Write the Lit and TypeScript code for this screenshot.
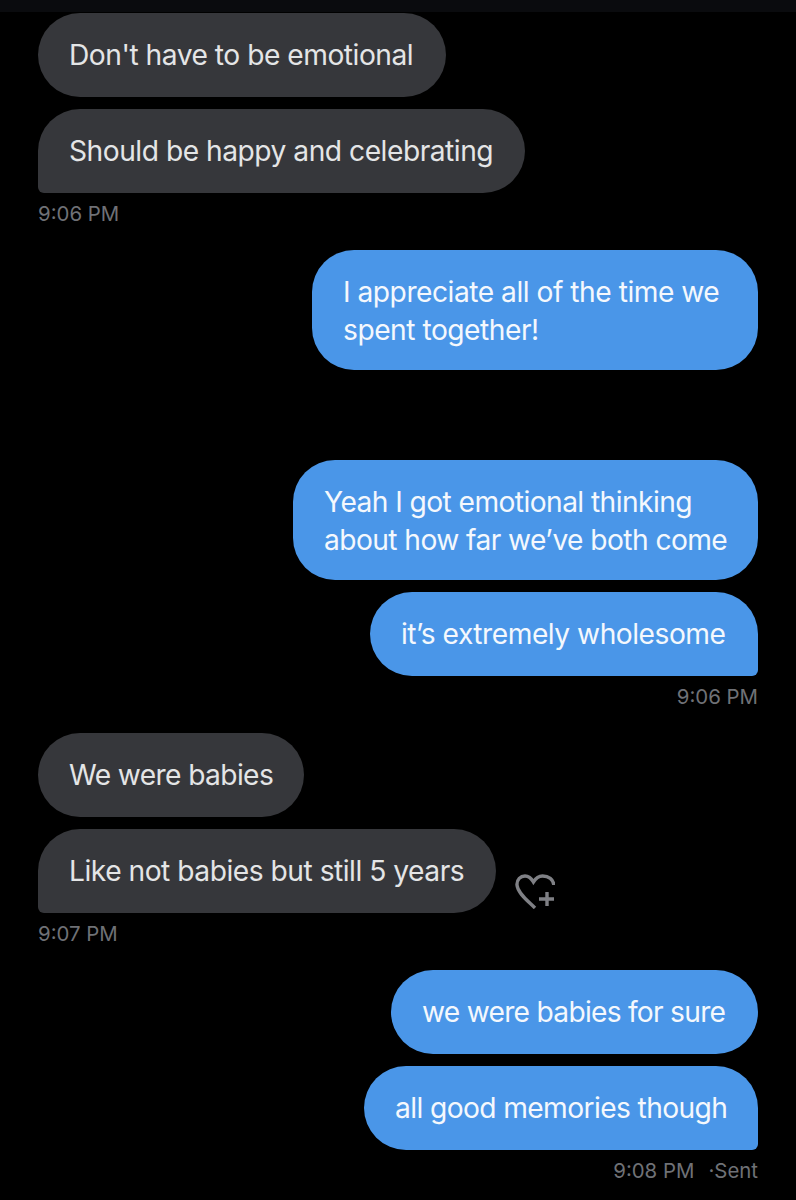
import { LitElement, html, css } from 'lit';
import { customElement } from 'lit/decorators.js';

type Bubble = {
    lines: string[];
    width: number;
    spacing?: number;
    react?: boolean;
};

type Group = {
    side: 'in' | 'out';
    bubbles: Bubble[];
    time?: string;
    sent?: boolean;
    after: number;
};

const groups: Group[] = [
    {
        side: 'in',
        bubbles: [
            { lines: ["Don't have to be emotional"], width: 408 },
            { lines: ['Should be happy and celebrating'], width: 487 },
        ],
        time: '9:06 PM',
        after: 17,
    },
    {
        side: 'out',
        bubbles: [{ lines: ['I appreciate all of the time we', 'spent together!'], width: 446 }],
        after: 90,
    },
    {
        side: 'out',
        bubbles: [
            { lines: ['Yeah I got emotional thinking', 'about how far we’ve both come'], width: 465, spacing: -0.09 },
            { lines: ['it’s extremely wholesome'], width: 388, spacing: 0 },
        ],
        time: '9:06 PM',
        after: 17,
    },
    {
        side: 'in',
        bubbles: [
            { lines: ['We were babies'], width: 266, spacing: -0.14 },
            { lines: ['Like not babies but still 5 years'], width: 458, react: true },
        ],
        time: '9:07 PM',
        after: 17,
    },
    {
        side: 'out',
        bubbles: [
            { lines: ['we were babies for sure'], width: 367, spacing: -0.25 },
            { lines: ['all good memories though'], width: 394, spacing: -0.12 },
        ],
        time: '9:08 PM',
        sent: true,
        after: 0,
    },
];

@customElement('app-root')
export class AppRoot extends LitElement {
    static styles = css`
    :host {
        display: block;
        width: 796px;
        height: 1200px;
        overflow: hidden;
        background: #000;
        font-family: Inter, "Liberation Sans", sans-serif;
    }
    .topbar {
        height: 12px;
        background: #0a0b0e;
    }
    .thread {
        display: flex;
        flex-direction: column;
        padding: 1px 38px 0;
    }
    .group {
        display: flex;
        flex-direction: column;
        gap: 12px;
    }
    .group.out {
        align-items: flex-end;
    }
    .group.in {
        align-items: flex-start;
    }
    .row {
        display: flex;
        align-items: flex-end;
    }
    .bubble {
        box-sizing: border-box;
        padding: 23px 31px;
        border-radius: 42px;
        font-size: 28.2px;
        line-height: 38px;
        white-space: nowrap;
    }
    .bubble.multi {
        padding-bottom: 21px;
    }
    .in .bubble {
        background: #36373b;
        color: #e4e5e6;
    }
    .out .bubble {
        background: #4a96e8;
        color: #f4f8fd;
    }
    .in .bubble.tail {
        border-bottom-left-radius: 6px;
    }
    .out .bubble.tail {
        border-bottom-right-radius: 6px;
    }
    .line {
        display: block;
    }
    .react {
        display: block;
        margin: 0 0 4px 19px;
        flex: none;
    }
    .time {
        margin-top: -11px;
        height: 39px;
        font-size: 20.4px;
        line-height: 40px;
        color: #6f7176;
        white-space: nowrap;
    }
    .status {
        margin-left: 14px;
    }
    `;

    renderBubble(b: Bubble, tail: boolean) {
        const classes = `bubble ${tail ? 'tail' : ''} ${b.lines.length > 1 ? 'multi' : ''}`;
        return html`
        <div class="row">
            <div class=${classes} style="width: ${b.width}px">
                ${b.lines.map((l) => html`<span class="line" style="letter-spacing: ${-0.49 + (b.spacing ?? 0)}px">${l}</span>`)}
            </div>
            ${b.react ? html`
            <svg class="react" width="40" height="35" viewBox="0 0 40 35" fill="none" stroke="#7f8085" stroke-width="3.4">
                <path d="M20 34 C13 27 2.5 19 2 11 C1.7 5.5 5.6 2 10 2 C14 2 16.4 4.4 18.4 8 C20.6 4.4 23.6 2 27.6 2 C33.6 2 38.4 5.4 38.8 11"/>
                <path d="M32 18 V32 M24 25 H39"/>
            </svg>` : ''}
        </div>
        `;
    }

    render() {
        return html`
        <div class="topbar"></div>
        <div class="thread">
            ${groups.map((g) => html`
            <div class="group ${g.side}" style="margin-bottom: ${g.after}px">
                ${g.bubbles.map((b, i) => this.renderBubble(b, !!g.time && i === g.bubbles.length - 1))}
                ${g.time ? html`
                <div class="time">${g.time}${g.sent ? html`<span class="status">·Sent</span>` : ''}</div>` : ''}
            </div>
            `)}
        </div>
        `;
    }
}
